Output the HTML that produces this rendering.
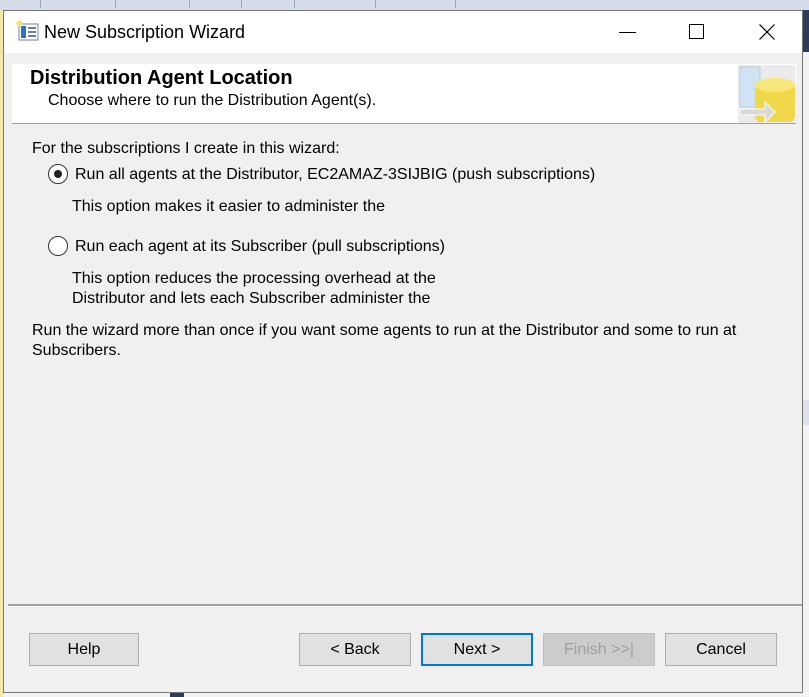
<!DOCTYPE html>
<html><head><style>
*{margin:0;padding:0;box-sizing:border-box}
body{width:809px;height:697px;position:relative;overflow:hidden;background:#f3f3f3;font-family:"Liberation Sans",Arial,sans-serif;color:#000}
.a{position:absolute}
.t{position:absolute;font-size:16px;white-space:nowrap}
.btn{position:absolute;top:633px;height:33px;background:#e1e1e1;border:1px solid #adadad;font-size:16px;text-align:center;line-height:31px}
.radio{position:absolute;width:20px;height:20px;border:1.5px solid #333;border-radius:50%;background:#fff}
</style></head><body>
<div class="a" style="left:0;top:0;width:809px;height:10px;background:#d6dbe9"></div>
<div class="a" style="left:40px;top:0;width:1px;height:8px;background:#9aa"></div>
<div class="a" style="left:115px;top:0;width:1px;height:8px;background:#9aa"></div>
<div class="a" style="left:189px;top:0;width:1px;height:8px;background:#9aa"></div>
<div class="a" style="left:241px;top:0;width:1px;height:8px;background:#9aa"></div>
<div class="a" style="left:294px;top:0;width:1px;height:8px;background:#9aa"></div>
<div class="a" style="left:375px;top:0;width:1px;height:8px;background:#9aa"></div>
<div class="a" style="left:455px;top:0;width:1px;height:8px;background:#9aa"></div>
<div class="a" style="left:0;top:10px;width:4px;height:687px;background:#f5e7a8"></div>
<div class="a" style="left:803px;top:10px;width:6px;height:42px;background:#2b3b58"></div>
<div class="a" style="left:803px;top:400px;width:6px;height:25px;background:#dde0e8"></div>
<div class="a" style="left:170px;top:692px;width:14px;height:5px;background:#2b3b58"></div>
<!-- window -->
<div class="a" style="left:3px;top:10px;width:800px;height:683px;background:#f0f0f0;border:1px solid #777"></div>
<div class="a" style="left:4px;top:11px;width:798px;height:42px;background:#fff"></div>
<svg class="a" style="left:16px;top:20px" width="24" height="22" viewBox="0 0 24 22">
<rect x="3" y="4" width="19" height="16" fill="#fff" stroke="#6a7fa0"/>
<rect x="5" y="6" width="5" height="12" fill="#2f6fc0"/>
<g fill="#6a7fa0"><rect x="12" y="7" width="8" height="2"/><rect x="12" y="11" width="8" height="2"/><rect x="12" y="15" width="8" height="2"/></g>
<circle cx="3.5" cy="3.5" r="3" fill="#f7e25a"/>
</svg>
<div class="t" style="left:44px;top:22px;font-size:18px">New Subscription Wizard</div>
<div class="a" style="left:619px;top:32px;width:17px;height:1px;background:#000"></div>
<div class="a" style="left:689px;top:24px;width:15px;height:15px;border:1px solid #000"></div>
<svg class="a" style="left:759px;top:24px" width="16" height="16"><path d="M0.5 0.5L15.5 15.5M15.5 0.5L0.5 15.5" stroke="#000" stroke-width="1.2"/></svg>
<!-- header -->
<div class="a" style="left:12px;top:64px;width:784px;height:60px;background:#fff;border-bottom:1px solid #a0a0a0"></div>
<div class="t" style="left:30px;top:67px;font-size:20px;font-weight:bold">Distribution Agent Location</div>
<div class="t" style="left:48px;top:92px">Choose where to run the Distribution Agent(s).</div>
<svg class="a" style="left:738px;top:65px" width="57" height="58">
<rect x="0" y="0" width="57" height="58" fill="#eaeaea"/>
<rect x="2" y="2" width="20" height="40" fill="#cfe3f5" stroke="#b8cde0"/>
<rect x="17" y="17" width="40" height="40" rx="6" fill="#f0d84a"/>
<ellipse cx="37" cy="20" rx="20" ry="7" fill="#f7e77a"/>
<path d="M2 44h25v-7l10 10l-10 10v-7H2z" fill="#d8d8d8" stroke="#fff"/>
</svg>
<!-- body -->
<div class="t" style="left:32px;top:140px">For the subscriptions I create in this wizard:</div>
<div class="radio" style="left:48px;top:164px"></div>
<div class="a" style="left:54px;top:170px;width:8px;height:8px;border-radius:50%;background:#222"></div>
<div class="t" style="left:75px;top:166px">Run all agents at the Distributor, EC2AMAZ-3SIJBIG (push subscriptions)</div>
<div class="t" style="left:72px;top:198px">This option makes it easier to administer the</div>
<div class="radio" style="left:48px;top:236px"></div>
<div class="t" style="left:75px;top:238px">Run each agent at its Subscriber (pull subscriptions)</div>
<div class="t" style="left:72px;top:270px">This option reduces the processing overhead at the</div>
<div class="t" style="left:72px;top:290px">Distributor and lets each Subscriber administer the</div>
<div class="t" style="left:32px;top:322px">Run the wizard more than once if you want some agents to run at the Distributor and some to run at</div>
<div class="t" style="left:32px;top:342px">Subscribers.</div>
<!-- separator -->
<div class="a" style="left:8px;top:604px;width:794px;height:2px;background:#a0a0a0"></div>
<div class="a" style="left:8px;top:606px;width:794px;height:1px;background:#fff"></div>
<div class="btn" style="left:29px;width:110px">Help</div>
<div class="btn" style="left:299px;width:112px">&lt; Back</div>
<div class="btn" style="left:421px;width:112px;border:2px solid #0078d7;line-height:29px">Next &gt;</div>
<div class="btn" style="left:543px;width:112px;background:#cccccc;border-color:#bfbfbf;color:#a0a0a0">Finish &gt;&gt;|</div>
<div class="btn" style="left:665px;width:112px">Cancel</div>
</body></html>
